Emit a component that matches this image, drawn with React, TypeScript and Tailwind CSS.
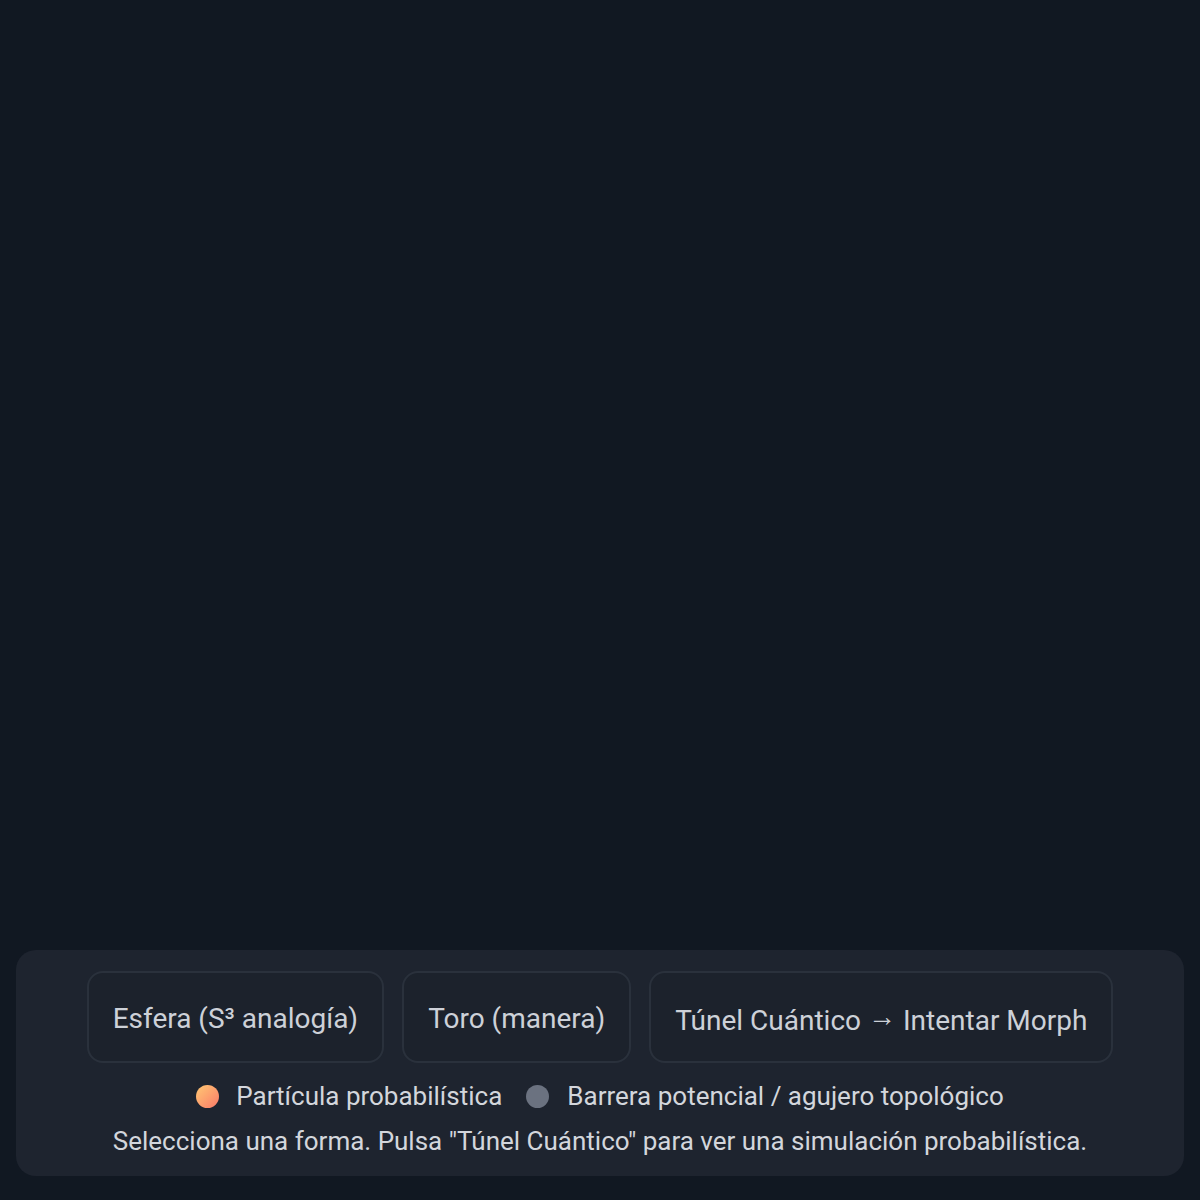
import { useState } from "react";

const SHAPES = ["Esfera (S³ analogía)", "Toro (manera)"] as const;

export default function App() {
  const [shape, setShape] = useState<string>("Esfera (S³ analogía)");

  return (
    <div
      className="flex h-[1200px] w-full flex-col justify-end bg-[#111822] px-4 pb-6"
      style={{ fontFamily: "Roboto, 'Noto Sans', sans-serif" }}
    >
      {/* Controls panel */}
      <div className="flex flex-col items-center rounded-[20px] bg-[#1e242f] pt-[21px] pb-[17px]">
        <div className="flex items-center gap-[18px]">
          {SHAPES.map((s) => (
            <button
              key={s}
              onClick={() => setShape(s)}
              className="h-[92px] rounded-[16px] border-2 border-[#2a313c] bg-[#1c222c] px-[24px] pt-[3px] text-[28px] text-[#cdd1d8]"
            >
              {s}
            </button>
          ))}
          <button className="h-[92px] rounded-[16px] border-2 border-[#2a313c] bg-[#1c222c] px-[24px] pt-[4px] text-[28px] text-[#cdd1d8]">
            Túnel Cuántico <span className="align-[4px]">→</span> Intentar Morph
          </button>
        </div>

        {/* Legend */}
        <div className="mt-[15px] flex items-center text-[26px] leading-[36px] text-[#d3d6dc]">
          <span className="h-[23px] w-[23px] rounded-full bg-gradient-to-br from-[#fdc873] to-[#f97868]" />
          <span className="ml-[17px]">Partícula probabilística</span>
          <span className="ml-[24px] h-[23px] w-[23px] rounded-full bg-[#6b7280]" />
          <span className="ml-[18px]">Barrera potencial / agujero topológico</span>
        </div>

        <p className="mt-[9px] text-[26px] leading-[36px] text-[#d3d6dc]">
          Selecciona una forma. Pulsa "Túnel Cuántico" para ver una simulación probabilística.
        </p>
      </div>
    </div>
  );
}
